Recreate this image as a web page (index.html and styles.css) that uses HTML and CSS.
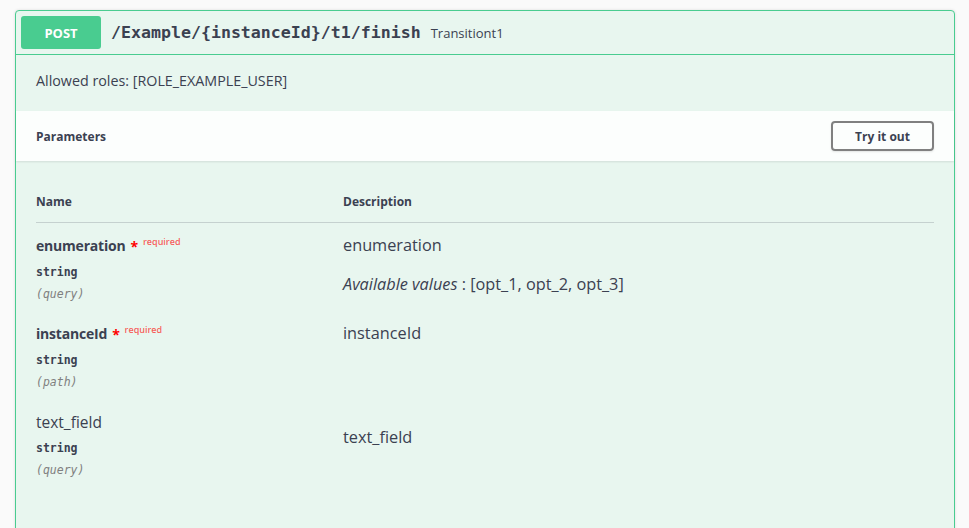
FILE: index.html
```html
<!DOCTYPE html>
<html lang="en">
<head>
<meta charset="utf-8">
<title>POST /Example/{instanceId}/t1/finish</title>
<link rel="stylesheet" href="styles.css">
</head>
<body>
<div class="page">
  <section class="opblock">
    <div class="summary">
      <span class="method">POST</span>
      <span class="path">/Example/{instanceId}/t1/finish</span>
      <span class="summary-desc">Transitiont1</span>
    </div>
    <div class="description">
      <p>Allowed roles: [ROLE_EXAMPLE_USER]</p>
    </div>
    <div class="section-header">
      <h4 class="section-title">Parameters</h4>
      <button class="try-out">Try it out</button>
    </div>
    <div class="table-container">
      <div class="params">
        <div class="params-head">
          <div class="col-head">Name</div>
          <div class="col-head">Description</div>
        </div>
        <div class="param-row">
          <div class="param-name-cell">
            <div class="param-name required">enumeration<span class="star">*</span><span class="req">required</span></div>
            <div class="param-type">string</div>
            <div class="param-in">(query)</div>
          </div>
          <div class="param-desc-cell">
            <p class="desc-line">enumeration</p>
            <p class="desc-line enum-values"><i>Available values</i> : [opt_1, opt_2, opt_3]</p>
          </div>
        </div>
        <div class="param-row">
          <div class="param-name-cell">
            <div class="param-name required">instanceId<span class="star">*</span><span class="req">required</span></div>
            <div class="param-type">string</div>
            <div class="param-in">(path)</div>
          </div>
          <div class="param-desc-cell">
            <p class="desc-line">instanceId</p>
          </div>
        </div>
        <div class="param-row">
          <div class="param-name-cell">
            <div class="param-name">text_field</div>
            <div class="param-type">string</div>
            <div class="param-in">(query)</div>
          </div>
          <div class="param-desc-cell desc-offset">
            <p class="desc-line">text_field</p>
          </div>
        </div>
      </div>
    </div>
  </section>
</div>
</body>
</html>
```
FILE: styles.css
```css
* { box-sizing: border-box; }
html, body { margin: 0; padding: 0; }
body {
  background: #fafafa;
  font-family: "Open Sans", "Noto Sans", sans-serif;
  color: #3b4151;
}
.page {
  padding: 10px 14px 0 15px;
}
.opblock {
  border: 1px solid #49cc90;
  border-radius: 4px;
  background: #e8f6ef;
  box-shadow: 0 0 3px rgba(0,0,0,.12);
  min-height: 560px;
}
.summary {
  display: flex;
  align-items: center;
  padding: 5px;
  border-bottom: 1px solid #49cc90;
}
.method {
  width: 80px;
  height: 33px;
  border-radius: 3px;
  background: #49cc90;
  color: #fff;
  font-weight: 700;
  font-size: 13px;
  display: flex;
  align-items: center;
  justify-content: center;
}
.path {
  font-family: "DejaVu Sans Mono", "Liberation Mono", monospace;
  font-weight: 700;
  font-size: 16.6px;
  padding: 0 10px;
  color: #3b4151;
}
.summary-desc {
  font-size: 13px;
  color: #3b4151;
}
.description {
  padding: 16px 20px 20px;
}
.description p {
  margin: 0;
  font-size: 14.3px;
  line-height: 20px;
}
.section-header {
  height: 50px;
  padding: 0 20px;
  display: flex;
  align-items: center;
  justify-content: space-between;
  background: rgba(255,255,255,.85);
  box-shadow: 0 1px 2px rgba(0,0,0,.1);
}
.section-title {
  margin: 0;
  font-size: 12px;
  font-weight: 700;
}
.try-out {
  width: 103px;
  height: 30px;
  border: 2px solid #808080;
  border-radius: 4px;
  background: transparent;
  font-family: inherit;
  font-size: 12px;
  font-weight: 700;
  color: #3b4151;
  box-shadow: 0 1px 2px rgba(0,0,0,.1);
}
.table-container {
  padding: 21px 20px 40px;
}
.params-head {
  display: grid;
  grid-template-columns: 307px 1fr;
  padding: 12px 0;
  border-bottom: 1px solid rgba(59,65,81,.2);
}
.col-head {
  font-size: 12px;
  font-weight: 700;
  line-height: 16px;
}
.param-row {
  display: grid;
  grid-template-columns: 307px 1fr;
  padding: 11px 0 9px;
}
.param-name {
  height: 24px;
  font-size: 14px;
  letter-spacing: -0.2px;
  line-height: 24px;
  color: #3b4151;
}
.param-name.required {
  font-weight: 700;
}
.star {
  color: #ff0000;
  font-size: 14px;
  line-height: 1;
  padding-left: 5px;
  position: relative;
  top: 1px;
}
.req {
  color: rgba(255,0,0,.65);
  font-size: 9px;
  font-weight: 600;
  letter-spacing: 0;
  line-height: 1;
  padding-left: 5px;
  position: relative;
  top: -6px;
}
.param-name:not(.required) {
  font-size: 15.5px;
  letter-spacing: 0;
}
.param-type {
  font-family: "DejaVu Sans Mono", "Liberation Mono", monospace;
  font-size: 11.5px;
  font-weight: 700;
  line-height: 16px;
  padding: 6px 0;
}
.param-in {
  font-family: "DejaVu Sans Mono", "Liberation Mono", monospace;
  font-size: 11.5px;
  font-style: italic;
  line-height: 16px;
  color: #808080;
}
.desc-line {
  margin: 0;
  font-size: 16.3px;
  line-height: 22px;
}
.enum-values {
  margin-top: 17px;
}
.desc-offset {
  padding-top: 16px;
}
```
